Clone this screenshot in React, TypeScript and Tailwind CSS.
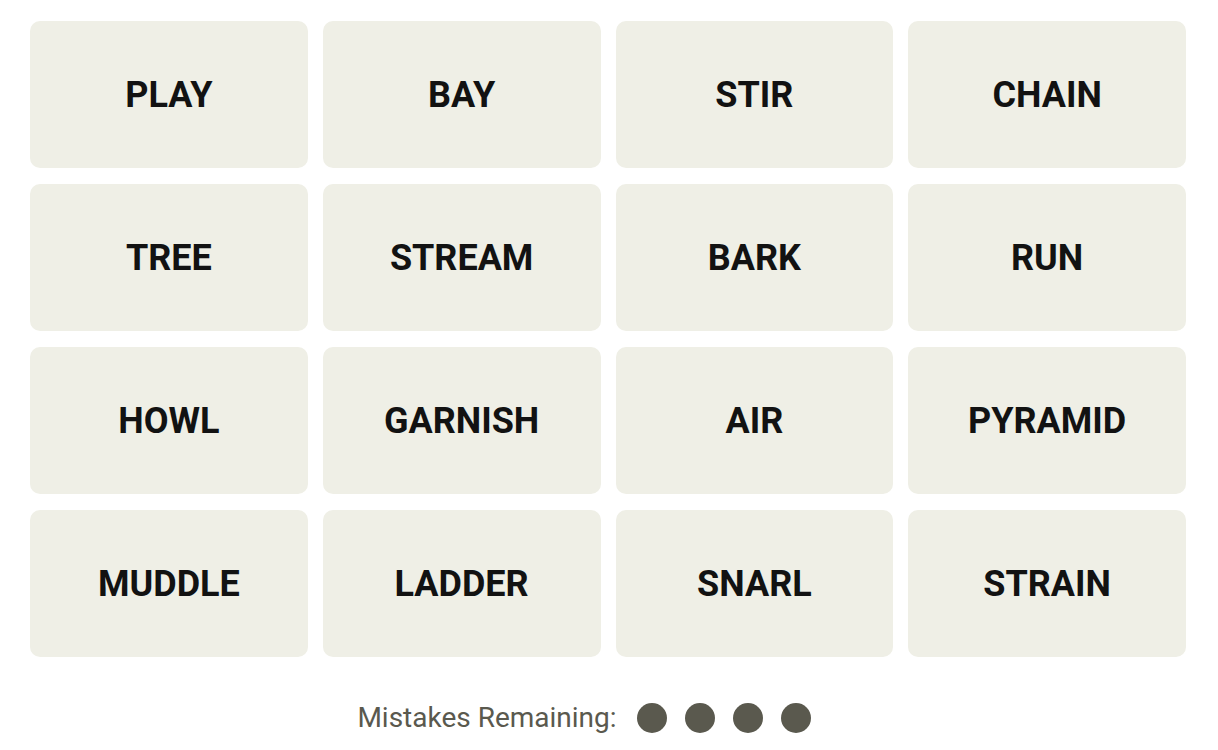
const words = [
  'PLAY', 'BAY', 'STIR', 'CHAIN',
  'TREE', 'STREAM', 'BARK', 'RUN',
  'HOWL', 'GARNISH', 'AIR', 'PYRAMID',
  'MUDDLE', 'LADDER', 'SNARL', 'STRAIN',
];

export default function App() {
  return (
    <div className="min-h-screen w-[1218px] bg-white pl-[30px] pr-[32px] pt-[21px]" style={{ fontFamily: 'Roboto, "Liberation Sans", sans-serif' }}>
      <div className="grid grid-cols-4 gap-x-[15px] gap-y-[16px]">
        {words.map((w) => (
          <button
            key={w}
            className="flex h-[147px] items-center justify-center rounded-[10px] bg-[#efefe6] text-[36px] font-bold text-[#121212]"
          >
            {w}
          </button>
        ))}
      </div>
      <div className="mt-[40px] flex items-center justify-center gap-[20px] pr-[48px]">
        <span className="text-[28px] font-normal text-[#5a594e]">Mistakes Remaining:</span>
        <div className="flex gap-[18px]">
          {[0, 1, 2, 3].map((i) => (
            <span key={i} className="h-[30px] w-[30px] rounded-full bg-[#5a594e]" />
          ))}
        </div>
      </div>
    </div>
  );
}
